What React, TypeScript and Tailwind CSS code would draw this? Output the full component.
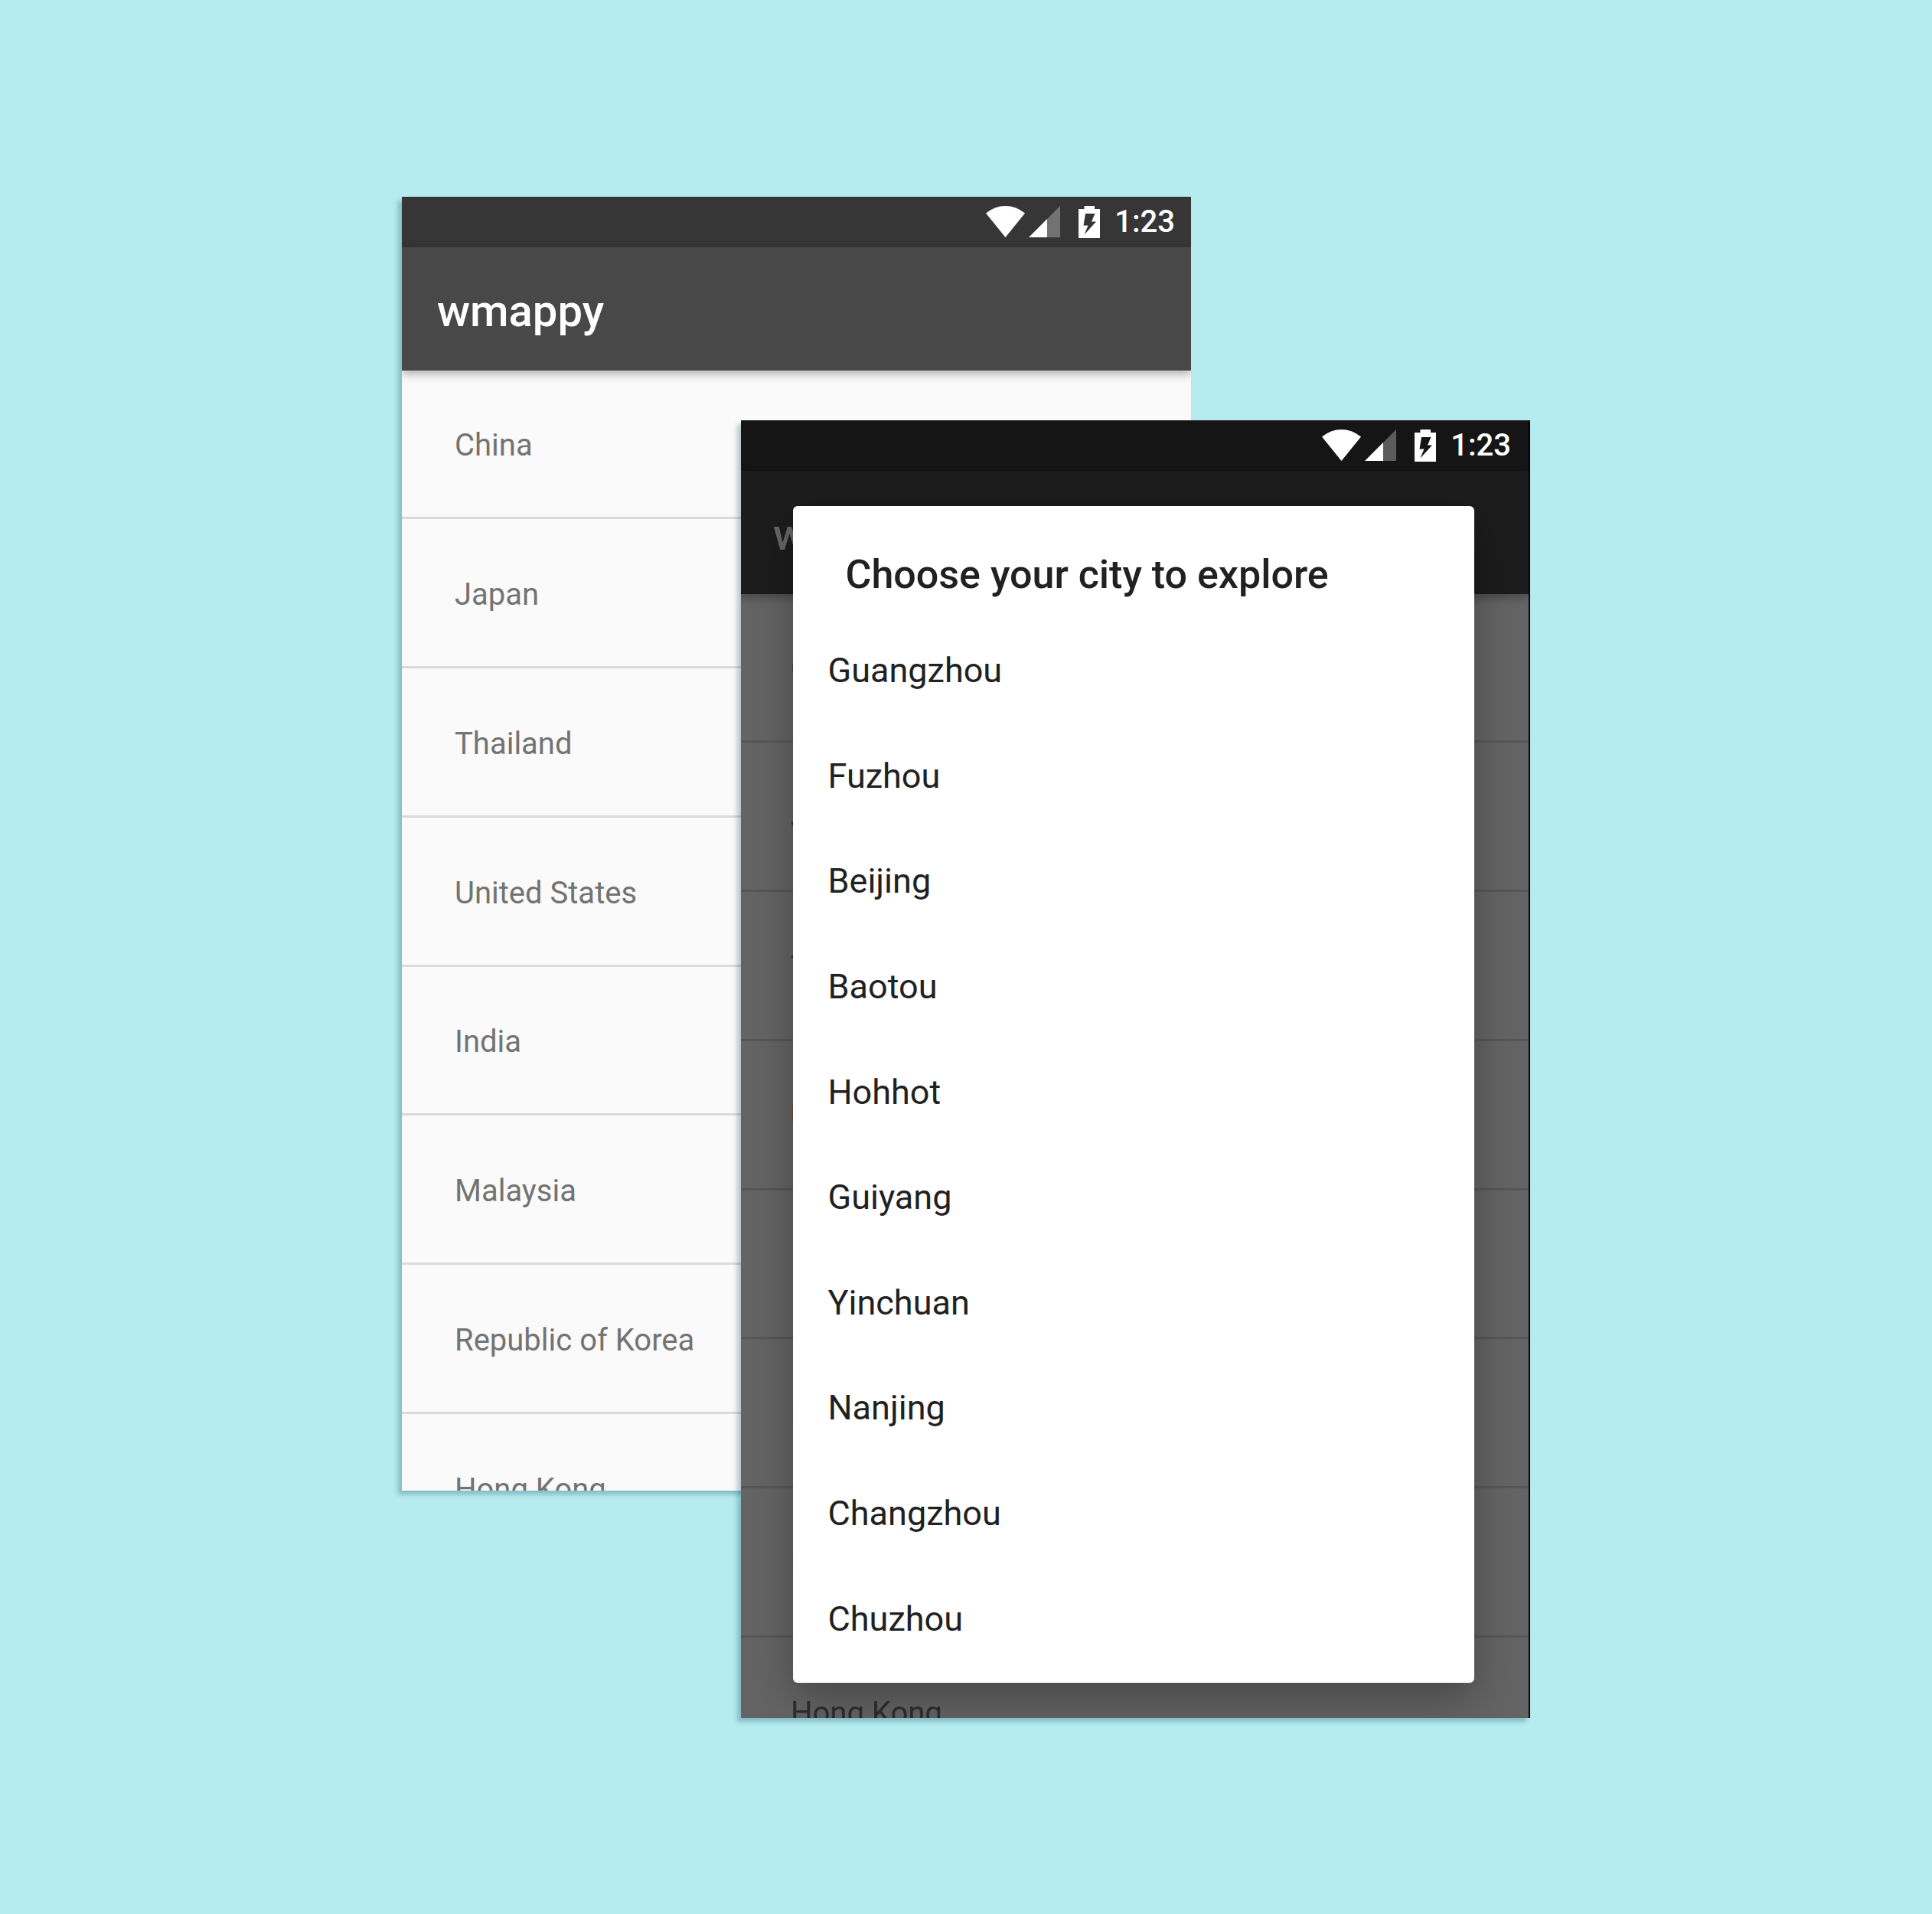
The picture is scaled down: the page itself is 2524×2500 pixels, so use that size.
import type { ReactNode } from 'react';

const countries = [
  'China',
  'Japan',
  'Thailand',
  'United States',
  'India',
  'Malaysia',
  'Republic of Korea',
  'Hong Kong',
];

const cities = [
  'Guangzhou',
  'Fuzhou',
  'Beijing',
  'Baotou',
  'Hohhot',
  'Guiyang',
  'Yinchuan',
  'Nanjing',
  'Changzhou',
  'Chuzhou',
];

function WifiIcon() {
  return (
    <svg width="51" height="41" viewBox="0 0 51 41" fill="currentColor" aria-hidden="true">
      <path d="M0 9.5A39 39 0 0 1 51 9.5L25.5 41Z" />
    </svg>
  );
}

function SignalIcon() {
  return (
    <svg width="41" height="41" viewBox="0 0 41 41" fill="currentColor" aria-hidden="true">
      <path d="M24 17V41H0Z" />
      <path d="M24 17L41 0V41H24Z" opacity="0.3" />
    </svg>
  );
}

function BatteryIcon() {
  return (
    <svg width="28" height="42" viewBox="0 0 28 42" fill="currentColor" aria-hidden="true">
      <path
        fillRule="evenodd"
        d="M7.5 0H21V4H28V42H0V4H7.5ZM9 10L6.5 25.5H12.5L7.5 37.5L23 20.5H17L21.5 10Z"
      />
    </svg>
  );
}

function StatusBar({ className }: { className: string }) {
  return (
    <div className="bg-[#363636]">
      <div className={`relative z-20 flex h-[66px] items-center justify-end text-white ${className}`}>
        <WifiIcon />
        <span className="ml-[5px]">
          <SignalIcon />
        </span>
        <span className="ml-6">
          <BatteryIcon />
        </span>
        <time className="ml-[19px] text-[40px] leading-[48px] font-medium">1:23</time>
      </div>
    </div>
  );
}

function CountryScreen({ statusClassName }: { statusClassName: string }) {
  return (
    <>
      <StatusBar className={statusClassName} />
      <header className="relative flex h-[161px] items-center bg-[#484848] px-[46px] pt-[6px] shadow-[0_4px_12px_rgba(0,0,0,0.32)]">
        <h1 className="text-[58px] leading-[68px] font-medium text-white">wmappy</h1>
      </header>
      <ul className="grid h-[1558px] auto-rows-fr">
        {countries.map((name) => (
          <li key={name} className="border-b-[3px] border-[#dadada]">
            <button
              type="button"
              className="h-full w-full px-[69px] pt-[6px] text-left text-[40px] leading-[48px] text-[#737373]"
            >
              {name}
            </button>
          </li>
        ))}
      </ul>
    </>
  );
}

function CityDialog() {
  return (
    <div
      role="dialog"
      aria-labelledby="city-title"
      className="mx-auto w-[890px] rounded-[6px] bg-white pb-[15px] text-[#212121] shadow-[0_20px_56px_rgba(0,0,0,0.3)]"
    >
      <h2 id="city-title" className="px-[69px] pt-[60px] pb-[26px] text-[52px] leading-[60px] font-medium">
        Choose your city to explore
      </h2>
      <ul className="grid h-[1376px] auto-rows-fr">
        {cities.map((city) => (
          <li key={city}>
            <button type="button" className="h-full w-full px-[46px] pt-[2px] text-left text-[45px] leading-[54px]">
              {city}
            </button>
          </li>
        ))}
      </ul>
    </div>
  );
}

function Phone({ className, children }: { className: string; children: ReactNode }) {
  return (
    <section
      className={`relative w-[1031px] shrink-0 overflow-hidden bg-[#fafafa] shadow-[-5px_5px_6px_rgba(0,70,95,0.28)] ${className}`}
    >
      {children}
    </section>
  );
}

export default function App() {
  return (
    <main className="flex min-h-screen items-center justify-center bg-[#b6ecef] font-[Roboto,sans-serif]">
      <div className="flex items-start">
        <Phone className="h-[1690px]">
          <CountryScreen statusClassName="pr-[21px]" />
        </Phone>
        <Phone className="mt-[292px] -ml-[588px] h-[1695px] border-r-2 border-black">
          <div className="-ml-1">
            <CountryScreen statusClassName="pr-[23px]" />
          </div>
          <div className="absolute inset-0 z-10 bg-black/60 pt-28 pr-1">
            <CityDialog />
          </div>
        </Phone>
      </div>
    </main>
  );
}
